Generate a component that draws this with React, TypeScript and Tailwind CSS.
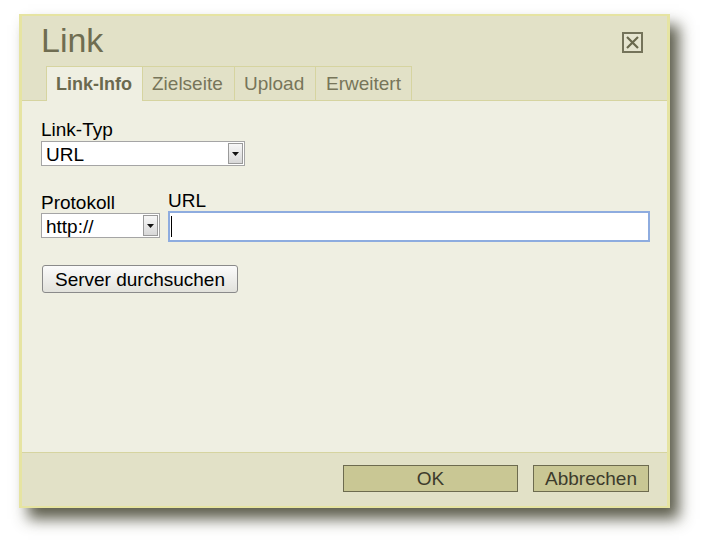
import React from "react";

const font = { fontFamily: '"Liberation Sans", Arial, sans-serif' };

function SelectBox({ width, text }: { width: string; text: string }) {
  return (
    <div className={`relative h-[25px] ${width} border border-[#a5a5a5] bg-white`}>
      <div className="pl-[4px] pt-[3px] text-[19px] leading-[19px] text-black">{text}</div>
      <div className="absolute right-[1px] top-[1px] flex h-[21px] w-[15px] items-center justify-center border border-[#9a9a9a] bg-gradient-to-b from-[#f7f7f7] to-[#d8d8d8]">
        <svg width="7" height="4" viewBox="0 0 7 4">
          <path d="M0 0h7L3.5 4z" fill="#111" />
        </svg>
      </div>
    </div>
  );
}

export default function App() {
  return (
    <div className="h-[540px] w-[702px] bg-white pl-[19px] pt-[14px]" style={font}>
      <div className="flex h-[494px] w-[651px] flex-col border-x-[3px] border-y-2 border-[#e6e4a2] bg-[#e2e1c7] shadow-[9px_11px_14px_rgba(65,65,45,0.85)]">
        {/* header */}
        <div className="flex h-[50px] items-start justify-between pl-[19px] pr-[24px]">
          <div className="pt-[7px] text-[34px] leading-[34px] text-[#6f6d51]">Link</div>
          <div className="mt-[16px] flex h-[21px] w-[21px] items-center justify-center border-2 border-[#74735a] bg-[#e6e5d0]">
            <svg width="13" height="13" viewBox="0 0 13 13">
              <path d="M1 1L12 12M12 1L1 12" stroke="#6a694e" strokeWidth="2.2" />
            </svg>
          </div>
        </div>
        {/* tabs */}
        <div className="flex h-[35px] items-end border-b border-[#d6d4a0] pl-[24px]">
          <div className="-mb-px h-[35px] w-[97px] border-x border-t border-[#d6d4a0] bg-[#efefe2] pl-[9px] pt-[8px] text-[18px] font-bold leading-[19px] text-[#6b694f]">
            Link-Info
          </div>
          <div className="h-[34px] w-[92px] border-r border-t border-[#d6d4a0] pl-[9px] pt-[7px] text-[19px] leading-[19px] text-[#77755a]">
            Zielseite
          </div>
          <div className="h-[34px] w-[81px] border-r border-t border-[#d6d4a0] pl-[9px] pt-[7px] text-[19px] leading-[19px] text-[#77755a]">
            Upload
          </div>
          <div className="h-[34px] w-[96px] border-r border-t border-[#d6d4a0] pl-[10px] pt-[7px] text-[19px] leading-[19px] text-[#77755a]">
            Erweitert
          </div>
        </div>
        {/* content */}
        <div className="h-[351px] bg-[#efefe2] pl-[19px] pr-[17px] pt-[19px] text-[19px] leading-[19px] text-black">
          <div>Link-Typ</div>
          <div className="mt-[2px]">
            <SelectBox width="w-[204px]" text="URL" />
          </div>
          <div className="mt-[25px] flex gap-[8px]">
            <div className="pt-[2px]">
              <div>Protokoll</div>
              <div className="mt-[1px]">
                <SelectBox width="w-[119px]" text="http://" />
              </div>
            </div>
            <div className="flex-1">
              <div>URL</div>
              <div className="mt-[1px] h-[31px] border-2 border-[#8eacdf] bg-white pl-[1px] pt-[3px]">
                <div className="h-[21px] w-px bg-black" />
              </div>
            </div>
          </div>
          <div className="ml-px mt-[23px] flex h-[28px] w-[196px] items-center justify-center rounded-[3px] border border-[#8a8a8a] bg-gradient-to-b from-[#fbfbfb] to-[#e2e2dc]">
            Server durchsuchen
          </div>
        </div>
        {/* footer */}
        <div className="flex h-[54px] justify-end gap-[15px] border-t border-[#d6d4a0] pr-[18px] pt-[12px] text-[19px] leading-[19px] text-[#3d3c2c]">
          <div className="flex h-[27px] w-[175px] items-center justify-center border border-[#6d6b4f] bg-[#c9c794]">OK</div>
          <div className="flex h-[27px] w-[116px] items-center justify-center border border-[#6d6b4f] bg-[#c9c794]">Abbrechen</div>
        </div>
      </div>
    </div>
  );
}
